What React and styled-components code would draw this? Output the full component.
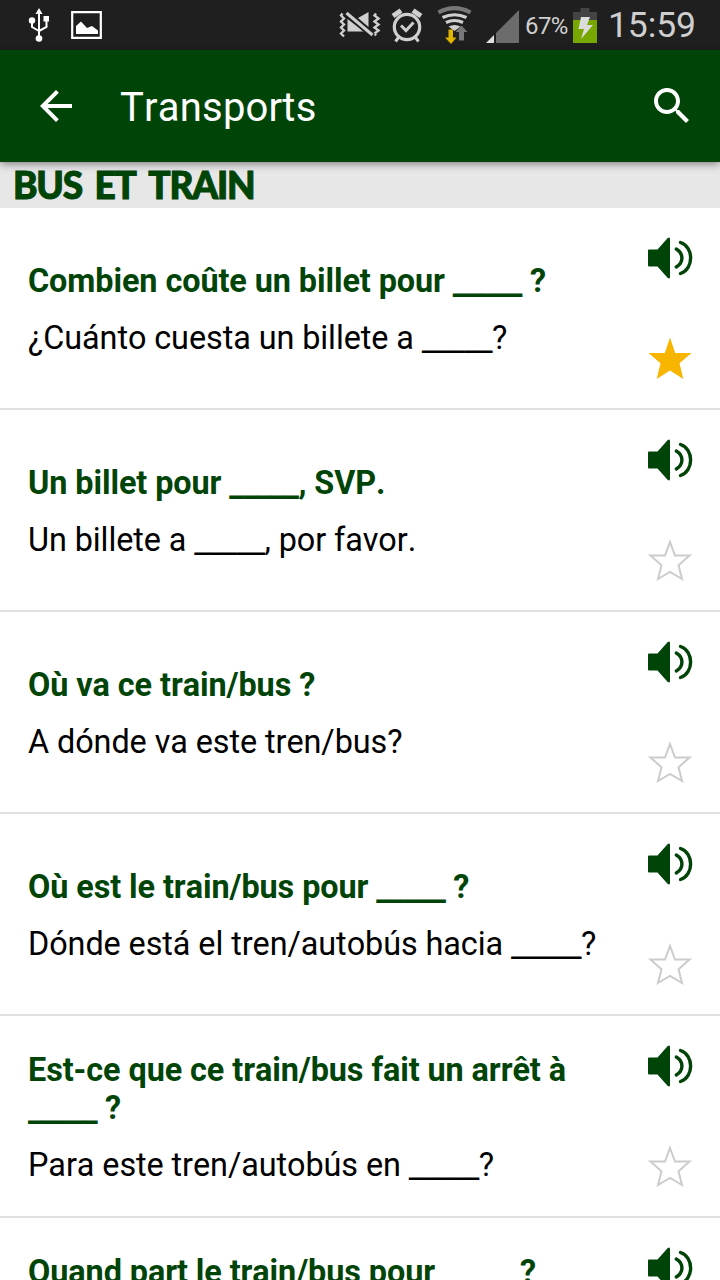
import styled, { createGlobalStyle, ThemeProvider } from 'styled-components';

const theme = {
  colors: {
    primary: '#004408',
    statusBar: '#1f1f1f',
    statusIcon: '#cfcfcf',
    section: '#e7e7e7',
    divider: '#e0e0e0',
    starOn: '#f7b500',
    starOff: '#cccccc',
  },
};

const GlobalStyle = createGlobalStyle`
  * {
    box-sizing: border-box;
  }

  body {
    margin: 0;
    background: #fff;
    font-family: Roboto, 'Liberation Sans', sans-serif;
    font-kerning: none;
  }
`;

const Screen = styled.div`
  width: 720px;
  height: 1280px;
  overflow: hidden;
  background: #fff;
`;

const StatusBar = styled.div`
  display: flex;
  justify-content: space-between;
  height: 50px;
  padding: 0 24px 0 26px;
  background: ${({ theme: { colors } }) => colors.statusBar};
`;

const StatusGroup = styled.div`
  display: flex;
  align-items: center;
`;

const StatusIcon = styled.svg`
  display: block;
  flex: none;
  width: ${({ $width }) => $width}px;
  height: 50px;
  margin-right: ${({ $gap }) => $gap || 0}px;
`;

const Percent = styled.span`
  width: 48px;
  padding-top: 2px;
  font-size: 24px;
  line-height: 48px;
  letter-spacing: -0.6px;
  color: ${({ theme: { colors } }) => colors.statusIcon};
  white-space: nowrap;
`;

const Clock = styled.span`
  width: 88px;
  font-size: 35.5px;
  line-height: 49px;
  letter-spacing: -0.1px;
  color: ${({ theme: { colors } }) => colors.statusIcon};
  white-space: nowrap;
`;

const AppBar = styled.header`
  position: relative;
  display: flex;
  align-items: center;
  height: 112px;
  padding: 0 24px 0 32px;
  background: ${({ theme: { colors } }) => colors.primary};
  box-shadow: 0 2px 8px rgba(0, 0, 0, 0.45);
`;

const BarIcon = styled.svg`
  display: block;
  flex: none;
  width: 48px;
  height: 48px;
  fill: #fff;
`;

const Title = styled.h1`
  flex: 1;
  margin: 0 0 0 40px;
  padding-top: 4px;
  font-size: 40px;
  font-weight: 400;
  line-height: 48px;
  letter-spacing: 0.2px;
  color: #fff;
`;

const Section = styled.h2`
  height: 46px;
  margin: 0;
  padding-left: 13px;
  background: ${({ theme: { colors } }) => colors.section};
  color: ${({ theme: { colors } }) => colors.primary};
  font-family: Lato, sans-serif;
  font-size: 37px;
  font-weight: 900;
  line-height: 45px;
  letter-spacing: -1.2px;
  word-spacing: 5px;
  white-space: nowrap;
  -webkit-text-stroke: 1px ${({ theme: { colors } }) => colors.primary};
`;

const Row = styled.div`
  display: flex;
  justify-content: space-between;
  height: 202px;
  padding: 0 26px 0 28px;
  border-bottom: 2px solid ${({ theme: { colors } }) => colors.divider};
`;

const Phrase = styled.div`
  display: flex;
  flex-direction: column;
  justify-content: center;
  gap: 19px;
  padding-top: 2px;
  font-size: 32.4px;
  line-height: 38px;
  letter-spacing: -0.08px;
  white-space: pre-line;
`;

const Source = styled.div`
  font-weight: 700;
  color: ${({ theme: { colors } }) => colors.primary};
`;

const Translation = styled.div`
  color: #000;
`;

const Blank = styled.span`
  letter-spacing: -0.6px;
  line-height: 0;
  vertical-align: ${({ $drop }) => -$drop}px;
`;

const Actions = styled.div`
  display: flex;
  flex-direction: column;
  gap: 54px;
  padding-top: 27px;
`;

const ActionIcon = styled.svg`
  display: block;
  width: 48px;
  height: 46px;
`;

const Speaker = () => (
  <ActionIcon viewBox="0 0 48 46">
    <path d="M3 14.5h8.5L21.500 3.200q2.500-2 2.500 1v37.600q0 3-2.500 1L11.500 31.500H3q-1 0-1-1v-15q0-1 1-1z" fill={theme.colors.primary} />
    <path
      d="M30.300 14c7.500 4.500 7.500 13.500 0 18M34.500 7.500c13.500 4.500 13.500 26.500 0 31"
      fill="none"
      stroke={theme.colors.primary}
      strokeWidth="3.400"
      strokeLinecap="round"
    />
  </ActionIcon>
);

const Star = ({ active }) => (
  <ActionIcon viewBox="0 0 48 46">
    {active ? (
      <path d="M24 2.500l5.200 15.500H45.500L33.500 28.300 37.300 44 24 35.600 10.700 44 14.500 28.300 2.500 18H18.800z" fill={theme.colors.starOn} />
    ) : (
      <path
        d="M24 5l5 13.500H43.500L32.500 28.300 36 42 24 34.900 12 42 15.500 28.300 4.500 18.500H19z"
        fill="none"
        stroke={theme.colors.starOff}
        strokeWidth="2"
      />
    )}
  </ActionIcon>
);

const phrases = [
  { source: 'Combien coûte un billet pour _____ ?', translation: '¿Cuánto cuesta un billete a _____?', favorite: true },
  { source: 'Un billet pour _____, SVP.', translation: 'Un billete a _____, por favor.' },
  { source: 'Où va ce train/bus ?', translation: 'A dónde va este tren/bus?' },
  { source: 'Où est le train/bus pour _____ ?', translation: 'Dónde está el tren/autobús hacia _____?' },
  { source: 'Est-ce que ce train/bus fait un arrêt à\n_____ ?', translation: 'Para este tren/autobús en _____?' },
  { source: 'Quand part le train/bus pour _____ ?', translation: 'Cuándo sale el tren/autobús hacia\n_____?' },
];

const withBlank = (text, drop) => {
  const [before, after] = text.split('_____');
  if (after === undefined) return text;
  return (
    <>
      {before}
      <Blank $drop={drop}>_____</Blank>
      {after}
    </>
  );
};

const StatusIcons = () => (
  <StatusBar>
    <StatusGroup>
      <StatusIcon $width={26} $gap={19} viewBox="0 0 26 50">
        <g fill="none" stroke="#fff" strokeWidth="2">
          <path d="M13 12v26M6 21v6l7 4M20.500 19v8l-7.500 4" />
        </g>
        <g fill="#fff">
          <path d="M13 8l3.500 6h-7z" />
          <circle cx="6" cy="20.500" r="3.200" />
          <path d="M17.500 16h5.500v5.500h-5.500z" />
          <circle cx="13" cy="38.500" r="3.300" />
        </g>
      </StatusIcon>
      <StatusIcon $width={31} viewBox="0 0 31 50">
        <path d="M1.200 12.200h28.600v25.600H1.200z" fill="none" stroke="#fff" strokeWidth="2.200" />
        <path d="M5 34v-8l5-4.500 6 6.500 5-2 6 4.500V34z" fill="#fff" />
      </StatusIcon>
    </StatusGroup>
    <StatusGroup>
      <StatusIcon $width={43} $gap={9} viewBox="-1.5 0 43 50">
        <g fill="none" stroke={theme.colors.statusIcon} strokeWidth="2.400">
          <path d="M3 13.500l-1.500 2 3 3-3 3 3 3-3 3 3 3-3 3 3 3M36.500 13.500l-1.500 2 4 3-4 3 4 3-4 3 4 3-4 3 1.500 2" />
        </g>
        <path d="M8 19l17 12.500H8zM18.500 18L29 12v15z" fill={theme.colors.statusIcon} />
        <path d="M7 13.500l26.500 22.500" stroke={theme.colors.statusBar} strokeWidth="6" />
        <path d="M7 13l26 22" stroke={theme.colors.statusIcon} strokeWidth="3" />
      </StatusIcon>
      <StatusIcon $width={34} $gap={13} viewBox="-0.5 -0.5 34 50">
        <g fill="none" stroke={theme.colors.statusIcon}>
          <circle cx="16.500" cy="26.500" r="12.700" strokeWidth="3.200" />
          <path d="M10.500 25l5 5 7.500-8" strokeWidth="3" />
          <path d="M2.500 15.500l8-5.500M30.500 15.500l-8-5.500" strokeWidth="5" />
          <path d="M8 37l-3 4M25 37l3 4" strokeWidth="3" />
        </g>
      </StatusIcon>
      <StatusIcon $width={36} $gap={13} viewBox="0.5 0 36 50">
        <g fill="none" stroke={theme.colors.statusIcon} strokeWidth="3.200">
          <path d="M2 12.500q16-8.600 32 0" stroke="#777" strokeWidth="4.200" />
          <path d="M6 17.500q12-5.500 24 0M9.500 22.500q8.500-4 17 0" />
        </g>
        <path d="M12 26.500q6-3 12 0l-6 4.500z" fill={theme.colors.statusIcon} />
        <path d="M12 29.500h4.500v8H20l-5.500 6.500L8.500 37.500H12z" fill="#e0b400" />
        <path d="M22.500 40.500v-8.500H19l6-6.500 6 6.500h-3.500v8.500z" fill="#777" />
      </StatusIcon>
      <StatusIcon $width={33} $gap={6} viewBox="0 0 33 50">
        <path d="M10 33L33 10v33H10z" fill="#6c6c6c" />
        <path d="M0 43l8-8v8z" fill="#e0e0e0" />
      </StatusIcon>
      <Percent>67%</Percent>
      <StatusIcon $width={24} $gap={11} viewBox="0 0 24 50">
        <path d="M7.500 8h9v4H24v8H0v-8h7.500z" fill="#444" />
        <path d="M0 20h24v23H0z" fill="#78a800" />
        <path d="M8 17h9l-3 8h6L8 39l3-10H5.500z" fill="#dcdcdc" />
      </StatusIcon>
      <Clock>15:59</Clock>
    </StatusGroup>
  </StatusBar>
);

const App = () => (
  <ThemeProvider theme={theme}>
    <GlobalStyle />
    <Screen>
      <StatusIcons />
      <AppBar>
        <BarIcon viewBox="0 0 24 24">
          <path d="M20 11H7.830l5.590-5.590L12 4l-8 8 8 8 1.410-1.410L7.830 13H20v-2z" />
        </BarIcon>
        <Title>Transports</Title>
        <BarIcon viewBox="0 0 24 24">
          <path d="M15.500 14h-.79l-.28-.27C15.410 12.590 16 11.110 16 9.500 16 5.910 13.090 3 9.500 3S3 5.910 3 9.500 5.910 16 9.500 16c1.610 0 3.090-.59 4.230-1.570l.27.28v.79l5 4.990L20.490 19l-4.990-5zm-6 0C7.010 14 5 11.990 5 9.500S7.010 5 9.500 5 14 7.010 14 9.500 11.990 14 9.500 14z" />
        </BarIcon>
      </AppBar>
      <Section>BUS ET TRAIN</Section>
      {phrases.map(({ source, translation, favorite }) => (
        <Row key={source}>
          <Phrase>
            <Source>{withBlank(source, 1)}</Source>
            <Translation>{withBlank(translation, 2)}</Translation>
          </Phrase>
          <Actions>
            <Speaker />
            <Star active={favorite} />
          </Actions>
        </Row>
      ))}
    </Screen>
  </ThemeProvider>
);

export default App;
